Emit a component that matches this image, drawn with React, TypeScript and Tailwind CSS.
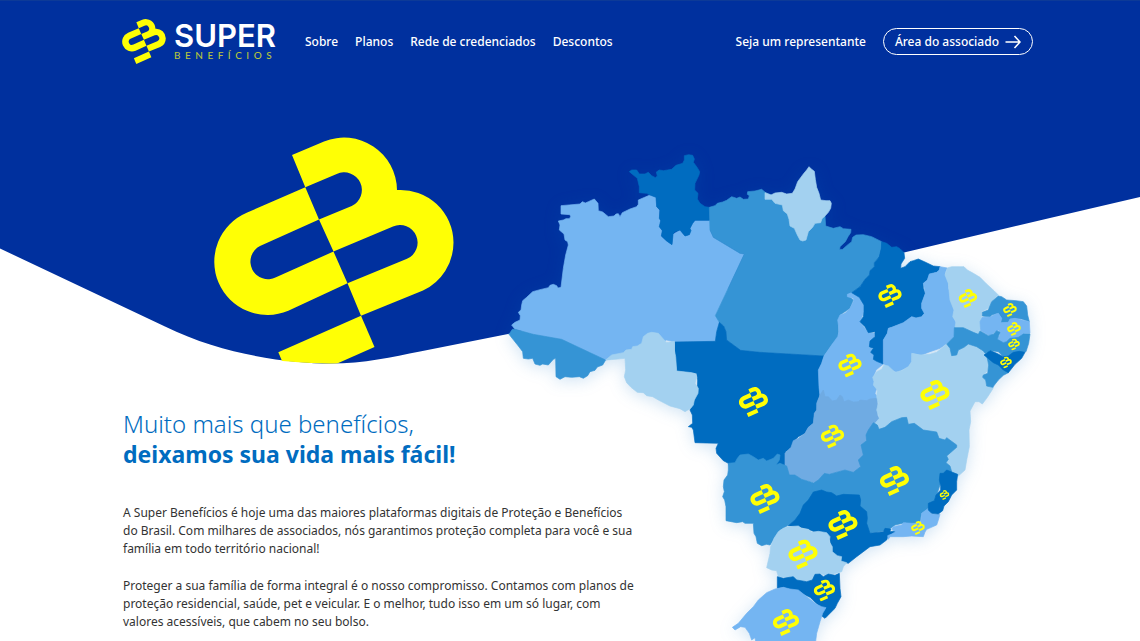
const ROYAL = "#00309e";
const DEEP = "#006cc0";
const MID = "#3594d5";
const SKY = "#74b5f2";
const STEEL = "#6fabe3";
const PALE = "#a3d1f0";

type Region = { id: string; fill: string; points: string };

// Map units are three per pixel, with the origin at the map's top left corner.
const regions: Region[] = [
  {
    id: "AM",
    fill: SKY,
    points:
      "35,555 45,547 60,540 61,527 55,517 63,510 65,495 68,482 80,472 98,455 120,449 145,443 150,436 160,433 170,437 174,444 183,442 190,385 197,345 205,315 203,305 195,300 192,282 178,270 180,255 175,243 190,240 198,236 208,236 212,230 210,224 183,222 183,197 240,192 247,185 256,189 265,185 283,177 294,190 295,212 308,216 325,230 342,228 348,222 355,221 360,230 367,218 390,207 410,200 415,193 415,180 450,165 468,172 470,200 478,210 478,235 482,242 478,260 487,272 484,288 500,303 516,314 519,283 540,270 555,288 568,284 570,265 578,250 585,241 630,241 630,270 640,292 720,340 733,342 646,527 658,547 650,575 646,604 525,606 500,600 400,640 317,660 185,598 100,583 45,568",
  },
  {
    id: "RR",
    fill: DEEP,
    points:
      "388,95 395,90 410,90 418,102 435,102 445,97 455,107 466,113 472,108 469,96 478,90 490,92 515,88 528,76 548,70 553,60 553,47 566,44 578,46 583,57 580,67 590,80 599,95 597,105 585,130 584,150 594,160 592,177 600,190 615,200 628,202 629,241 585,241 578,250 570,265 573,272 568,284 555,288 540,270 524,276 519,283 516,314 500,303 484,288 487,272 478,260 482,242 478,235 480,210 470,200 468,172 450,165 440,160 418,158 418,140 412,115",
  },
  {
    id: "PA",
    fill: MID,
    points:
      "628,202 645,197 652,190 668,186 680,181 695,170 710,175 720,171 730,178 745,177 748,167 742,163 743,155 765,153 785,148 797,158 850,180 975,228 977,258 1000,265 1020,260 1030,266 1053,268 1052,278 1044,290 1036,305 1020,320 1019,329 1028,328 1040,317 1055,305 1058,292 1068,285 1090,284 1115,290 1145,305 1144,325 1138,350 1123,368 1123,380 1110,392 1108,405 1095,418 1080,440 1055,458 1042,465 1060,480 1050,505 1020,525 1015,560 1015,590 995,615 972,648 780,637 722,631 680,600 678,575 671,558 658,547 646,527 733,342 720,340 640,292 630,270",
  },
  {
    id: "AP",
    fill: PALE,
    points:
      "795,158 813,165 825,159 845,157 860,162 877,160 885,147 893,125 910,102 920,90 927,80 935,88 943,94 946,118 950,142 957,160 962,180 978,182 990,182 994,190 992,205 985,217 975,228 966,236 962,248 945,250 938,262 925,275 918,300 908,303 900,300 892,285 883,265 870,258 867,238 862,222 850,212 847,195 825,190 815,178 795,178",
  },
  {
    id: "AC",
    fill: MID,
    points:
      "37,568 45,568 100,583 185,598 317,660 308,675 292,681 285,691 270,695 263,707 250,715 238,710 215,712 195,710 180,718 168,710 167,655 160,658 145,675 128,672 120,676 105,672 98,655 85,657 70,655 68,635 55,618 27,583",
  },
  {
    id: "MT",
    fill: DEEP,
    points:
      "525,606 646,604 650,575 658,547 671,558 678,575 680,600 722,631 780,637 972,648 958,690 957,740 960,765 952,785 950,810 943,820 940,850 925,862 915,880 895,890 880,905 875,922 857,935 855,975 830,985 690,985 685,970 670,962 650,940 648,925 655,910 585,908 580,870 575,862 565,860 578,850 577,825 570,810 592,760 593,720 590,700 530,693 525,650",
  },
  {
    id: "RO",
    fill: PALE,
    points:
      "317,660 335,645 370,638 378,630 395,628 398,620 412,618 425,610 430,590 443,580 455,577 475,580 490,597 500,608 523,604 523,630 527,650 530,693 575,698 587,702 590,712 585,730 595,745 594,760 583,780 580,795 572,805 555,815 540,806 510,798 475,780 458,770 440,767 430,758 412,757 393,742 380,728 373,710 377,690 375,655 345,658",
  },
  {
    id: "TO",
    fill: SKY,
    points:
      "1055,458 1042,463 1042,470 1060,475 1060,485 1050,505 1035,520 1020,525 1013,540 1016,560 1017,575 1013,590 995,615 972,648 965,670 955,690 957,740 960,770 975,790 1130,790 1135,775 1125,760 1132,740 1120,712 1128,690 1150,672 1125,660 1115,620 1125,580 1105,578 1080,545 1092,515 1095,485 1075,465",
  },
  {
    id: "MA",
    fill: DEEP,
    points:
      "1145,305 1160,310 1175,322 1190,320 1200,326 1212,338 1214,355 1203,372 1202,385 1215,380 1230,365 1240,362 1255,357 1275,366 1300,378 1320,380 1318,390 1310,397 1288,402 1282,420 1270,430 1270,445 1276,460 1265,490 1265,505 1273,520 1265,530 1248,534 1235,530 1210,548 1175,562 1165,565 1162,580 1150,600 1150,630 1150,672 1130,664 1120,658 1122,645 1112,637 1120,625 1108,620 1110,603 1125,590 1125,575 1105,578 1095,560 1080,545 1090,530 1092,515 1092,495 1078,472 1055,458 1080,440 1095,418 1108,405 1110,392 1123,380 1123,368 1138,350 1144,325",
  },
  {
    id: "PI",
    fill: SKY,
    points:
      "1320,380 1342,384 1335,400 1345,430 1345,445 1350,460 1352,480 1362,510 1360,530 1368,550 1362,590 1338,612 1320,625 1290,635 1265,645 1236,640 1235,665 1225,680 1205,690 1190,697 1165,685 1150,670 1150,600 1162,580 1165,565 1175,562 1210,548 1235,530 1248,534 1265,530 1273,520 1265,505 1265,490 1276,460 1270,430 1282,420 1288,402 1310,397 1318,390",
  },
  {
    id: "GO",
    fill: STEEL,
    points:
      "970,750 975,770 985,770 997,783 1010,780 1020,765 1027,770 1032,785 1045,780 1060,786 1075,785 1080,780 1100,782 1110,777 1130,775 1135,810 1132,825 1138,835 1135,865 1080,985 1060,997 1035,990 1005,998 988,1003 973,1000 955,1020 950,1030 935,1025 905,1018 885,1005 865,1005 855,975 855,940 873,922 880,902 895,895 915,880 925,862 940,850 943,820 950,810 950,790 960,765",
  },
  {
    id: "MS",
    fill: MID,
    points:
      "685,970 705,968 712,955 720,945 745,942 760,950 775,960 790,955 800,963 820,955 832,942 840,945 838,960 828,975 840,970 860,978 868,1005 885,1005 905,1018 940,1028 960,1080 905,1120 875,1150 840,1170 820,1200 810,1215 800,1213 785,1217 772,1210 768,1190 762,1180 760,1150 735,1150 728,1145 710,1148 678,1142 678,1100 674,1080 668,1070 673,1055 670,1040 672,1020 683,1005 685,990",
  },
  {
    id: "BA",
    fill: PALE,
    points:
      "1235,640 1260,645 1290,643 1310,637 1325,625 1340,612 1352,628 1355,645 1370,645 1375,630 1392,622 1405,612 1430,620 1450,635 1463,650 1467,670 1463,692 1450,705 1457,720 1460,738 1482,740 1475,752 1460,775 1447,792 1437,785 1425,785 1410,813 1412,845 1407,870 1408,920 1400,960 1395,990 1375,1008 1340,1010 1137,880 1137,867 1125,850 1138,835 1130,810 1135,790 1130,770 1132,750 1120,735 1122,725 1118,712 1130,695 1145,688 1152,675 1165,678 1185,697 1205,692 1225,680 1235,665",
  },
  {
    id: "MG",
    fill: MID,
    points:
      "1137,868 1155,862 1175,845 1205,833 1220,832 1225,853 1243,850 1270,870 1310,876 1317,895 1335,900 1340,893 1370,915 1370,922 1340,948 1345,958 1338,968 1350,978 1355,995 1330,1005 1305,1080 1290,1105 1265,1120 1260,1145 1235,1152 1215,1148 1185,1155 1165,1170 1110,1180 1085,1130 1075,1090 1020,1075 935,1055 940,1030 955,1020 973,1000 988,1003 1005,998 1035,990 1060,997 1082,980 1075,960 1090,945 1083,915 1100,902 1098,885 1105,870 1120,848 1132,855",
  },
  {
    id: "SP",
    fill: DEEP,
    points:
      "940,1056 965,1050 980,1056 995,1058 1010,1068 1030,1063 1078,1065 1082,1080 1080,1098 1100,1115 1102,1135 1100,1150 1110,1180 1150,1175 1155,1165 1172,1167 1170,1175 1187,1173 1185,1180 1165,1187 1160,1200 1140,1215 1110,1220 1070,1250 1045,1270 1025,1265 997,1235 990,1200 980,1180 950,1178 925,1168 895,1160 865,1157 885,1140 900,1120 910,1095 925,1080",
  },
  {
    id: "RJ",
    fill: SKY,
    points:
      "1285,1105 1295,1122 1320,1123 1315,1140 1310,1155 1280,1168 1275,1176 1270,1190 1235,1188 1210,1190 1170,1190 1165,1198 1163,1187 1175,1182 1187,1175 1175,1168 1180,1160 1205,1155 1210,1148 1235,1150 1262,1150 1265,1120",
  },
  {
    id: "ES",
    fill: DEEP,
    points:
      "1340,990 1373,1003 1370,1025 1370,1050 1355,1065 1345,1085 1332,1098 1328,1112 1315,1122 1295,1120 1285,1110 1285,1090 1303,1082 1308,1065 1322,1050 1322,1038 1318,1020 1320,1000 1330,1000",
  },
  {
    id: "PR",
    fill: PALE,
    points:
      "865,1160 895,1158 905,1165 925,1168 935,1177 955,1174 980,1178 990,1190 988,1205 997,1220 997,1235 1012,1247 1025,1250 1023,1263 1040,1268 1030,1280 1025,1295 1000,1302 985,1300 980,1308 960,1300 945,1305 935,1322 920,1325 885,1322 855,1312 835,1310 830,1292 815,1290 800,1283 810,1240 812,1220 822,1195 835,1175 850,1165",
  },
  {
    id: "SC",
    fill: DEEP,
    points:
      "832,1310 850,1315 880,1310 890,1320 920,1325 937,1320 945,1303 960,1302 970,1310 985,1302 1005,1306 1018,1300 1020,1345 1023,1370 1012,1390 1005,1405 980,1430 975,1435 965,1428 970,1402 960,1400 930,1372 895,1355 850,1342 832,1345",
  },
  {
    id: "RS",
    fill: SKY,
    points:
      "850,1342 870,1347 895,1350 930,1378 950,1393 965,1400 978,1403 968,1420 960,1445 950,1480 945,1520 770,1520 765,1493 755,1500 748,1480 735,1462 722,1460 705,1470 697,1462 715,1450 740,1420 760,1400 775,1380 800,1358 825,1347",
  },
  {
    id: "CE",
    fill: PALE,
    points:
      "1342,384 1355,380 1392,380 1402,390 1420,400 1440,412 1460,432 1482,452 1495,465 1485,475 1475,485 1470,502 1445,515 1445,555 1435,585 1420,577 1405,570 1390,563 1365,563 1368,545 1358,530 1362,510 1350,480 1345,430 1335,405",
  },
  {
    id: "RN",
    fill: MID,
    points:
      "1495,468 1505,470 1520,480 1548,482 1570,485 1580,498 1583,525 1588,545 1565,537 1545,535 1530,537 1525,547 1502,548 1505,535 1495,520 1475,525 1470,531 1447,528 1447,517 1465,510 1475,485",
  },
  {
    id: "PB",
    fill: SKY,
    points:
      "1447,532 1470,531 1485,523 1495,520 1505,535 1502,548 1525,547 1530,537 1545,535 1588,545 1590,580 1570,582 1555,592 1530,595 1522,605 1510,609 1500,605 1492,598 1500,585 1497,570 1485,575 1475,585 1465,585 1442,572 1440,545",
  },
  {
    id: "PE",
    fill: MID,
    points:
      "1363,563 1390,563 1405,570 1420,577 1435,583 1440,573 1465,587 1480,583 1490,572 1500,577 1492,598 1510,608 1520,605 1530,595 1555,592 1570,582 1590,582 1586,610 1578,635 1545,640 1525,650 1510,650 1495,635 1475,632 1455,640 1450,633 1430,620 1405,612 1392,622 1375,630 1370,645 1355,647 1350,625 1340,612 1362,590",
  },
  {
    id: "SE",
    fill: MID,
    points:
      "1460,645 1500,660 1525,698 1510,706 1495,720 1478,742 1460,738 1457,720 1448,712 1450,705 1463,700 1466,675",
  },
  {
    id: "AL",
    fill: DEEP,
    points:
      "1452,645 1463,637 1472,632 1490,640 1510,650 1525,648 1540,637 1558,634 1575,637 1565,655 1545,673 1525,698 1510,690 1495,675 1480,668",
  },
];

// Centre and width of each badge, in pixels of the map.
const badges: [string, number, number, number][] = [
  ["MT", 253.5, 262, 30],
  ["GO", 332.5, 296.5, 24],
  ["MS", 265, 359, 30],
  ["SP", 343, 385, 30],
  ["PR", 303, 414.5, 30],
  ["SC", 324.5, 450.5, 22],
  ["RS", 286, 482.5, 27],
  ["MA", 390, 156, 24],
  ["CE", 468, 158.5, 19],
  ["TO", 350, 225.5, 24],
  ["BA", 435, 255, 30],
  ["MG", 394.5, 341, 30],
  ["ES", 444.5, 355, 10],
  ["RJ", 418, 388, 14],
  ["RN", 510, 170, 14],
  ["PB", 514, 189, 14],
  ["PE", 514, 204.5, 12],
  ["AL", 506, 222.5, 12],
];

function EmblemShapes() {
  return (
    <g fill="#ffff05">
      <path d="M78 18 L110 4.5 A53 53 0 0 1 183 53 A53 53 0 0 1 239.5 105.5 A53 53 0 0 1 209 153.5 L147 178.7 L133.5 146.3 L193 121.8 A17.5 17.5 0 0 0 179 89.5 L119.5 114.5 L105 82.5 L137.7 69 A17.5 17.5 0 0 0 122.7 37 L91.3 50.3 Z" />
      <path d="M91.3 50.3 L32.7 75.7 A53 53 0 0 0 74.3 173.7 L133.5 146.3 L119.5 114.5 L62 140.3 A17.5 17.5 0 0 1 46 109 L105 82.5 Z" />
      <path d="M147 178.7 L160.5 210 L77.8 246.6 L64.3 215.3 Z" />
    </g>
  );
}

function Logo() {
  return (
    <a href="#inicio" aria-label="Super Benefícios" className="flex items-center gap-2">
      <svg viewBox="0 0 240 247" className="h-[45px] w-11" aria-hidden="true">
        <EmblemShapes />
      </svg>
      <span className="flex w-[103px] flex-col">
        <span className="font-[Inter,sans-serif] text-[31px] leading-[27px] font-semibold text-white">SUPER</span>
        <span className="font-[Lato,sans-serif] text-[10px] leading-3 tracking-[0.45em] text-[#b5c43c]">
          BENEFÍCIOS
        </span>
      </span>
    </a>
  );
}

function Header() {
  return (
    <header className="relative flex items-center border-t border-[#0d3a97] pt-[18px] pr-[107px] pl-[122px] text-xs font-medium whitespace-nowrap text-white">
      <Logo />
      <nav className="ml-7 flex gap-[17px]">
        <a href="#sobre">Sobre</a>
        <a href="#planos">Planos</a>
        <a href="#rede">Rede de credenciados</a>
        <a href="#descontos">Descontos</a>
      </nav>
      <div className="ml-auto flex items-center gap-[17px]">
        <a href="#representante">Seja um representante</a>
        <a href="#associado" className="flex h-[27px] items-center gap-1.5 rounded-full border border-white px-[11px]">
          Área do associado
          <svg viewBox="0 0 16 14" className="h-3.5 w-4" fill="none" stroke="currentColor" strokeWidth="1.5" aria-hidden="true">
            <path d="M0.5 7H15M9.5 1L15 7L9.5 13" />
          </svg>
        </a>
      </div>
    </header>
  );
}

function Wave() {
  return (
    <svg viewBox="0 0 1140 364" className="absolute inset-x-0 top-0 w-full" aria-hidden="true">
      <path
        fill={ROYAL}
        d="M0 0H1140V197L1050 218L904 252.5L508 334L420 351.5C392 357 365 363.5 330 363.5C292 363.5 225 356 165 326.5L0 248.5Z"
      />
    </svg>
  );
}

function HeroEmblem() {
  return (
    <svg viewBox="0 0 240 227" className="ml-[91px] w-60" aria-hidden="true">
      <clipPath id="hero-edge">
        <path d="M0 0H240V208L206 214.5C178 220 151 226.5 116 226.5C78 226.5 35 222 0 209Z" />
      </clipPath>
      <g clipPath="url(#hero-edge)">
        <EmblemShapes />
      </g>
    </svg>
  );
}

function BrazilMap() {
  return (
    <svg
      viewBox="0 0 1620 1503"
      role="img"
      aria-label="Mapa do Brasil"
      className="w-full drop-shadow-[0_3px_8px_rgba(0,108,192,0.18)]"
    >
      {regions.map((r) => (
        <polygon key={r.id} points={r.points} fill={r.fill} stroke={r.fill} strokeWidth="2" strokeLinejoin="round" />
      ))}
      {badges.map(([id, cx, cy, size]) => (
        <svg
          key={id}
          x={(cx - size / 2) * 3}
          y={(cy - size / 2) * 3}
          width={size * 3}
          height={size * 3}
          viewBox="0 0 240 247"
        >
          <EmblemShapes />
        </svg>
      ))}
    </svg>
  );
}

export default function App() {
  return (
    <div className="relative overflow-hidden bg-white font-['Noto_Sans',sans-serif]">
      <Wave />
      <Header />
      <main className="relative grid grid-cols-[377px_137px_minmax(0,1fr)] items-start pt-[73px] pr-[100px] pl-[123px]">
        <div className="relative z-10 col-span-2 col-start-1 row-start-1">
          <HeroEmblem />
          <h1 className="mt-[45px] text-2xl leading-[30px] font-light text-[#006cc0]">
            Muito mais que benefícios,
            <strong className="block text-[23px] font-bold">deixamos sua vida mais fácil!</strong>
          </h1>
          <div className="mt-[35px] flex flex-col gap-[19px] text-xs leading-[18px] text-[#333333]">
            <p>
              A Super Benefícios é hoje uma das maiores plataformas digitais de Proteção e Benefícios do Brasil. Com
              milhares de associados, nós garantimos proteção completa para você e sua família em todo território
              nacional!
            </p>
            <p>
              Proteger a sua família de forma integral é o nosso compromisso. Contamos com planos de proteção
              residencial, saúde, pet e veicular. E o melhor, tudo isso em um só lugar, com valores acessíveis, que
              cabem no seu bolso.
            </p>
          </div>
        </div>
        <div className="col-span-2 col-start-2 row-start-1 mt-[3px]">
          <BrazilMap />
        </div>
      </main>
    </div>
  );
}
